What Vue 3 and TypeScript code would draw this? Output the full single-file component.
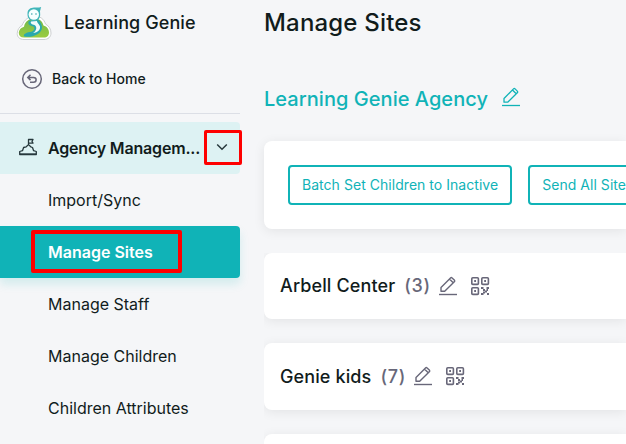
<script setup lang="ts">
interface Site {
  name: string
  count: number | null
}

const menu: string[] = ['Import/Sync', 'Manage Sites', 'Manage Staff', 'Manage Children', 'Children Attributes']
const current = 'Manage Sites'
const actions: string[] = ['Batch Set Children to Inactive', 'Send All Site']
const sites: Site[] = [
  { name: 'Arbell Center', count: 3 },
  { name: 'Genie kids', count: 7 },
  { name: '', count: null },
]
</script>

<template>
  <div class="page">
    <aside class="sidebar">
      <div class="brand">
        <svg class="logo" width="36" height="36" viewBox="0 0 36 36">
          <defs>
            <linearGradient id="hill" x1="0" y1="0" x2="0" y2="1">
              <stop offset="0" stop-color="#72b94d" />
              <stop offset="1" stop-color="#9bcc3f" />
            </linearGradient>
          </defs>
          <path d="M8 34.500C3.500 34.500 1.200 32 1.200 28.500C1.200 25 3.500 21.500 6 20.500C8 15 13 11 18.500 11C24 11 28 14 29.500 19C33 21 35 24 35 28C35 32 32 34.500 28 34.500Z" fill="#fff" stroke="#cdd0d1" stroke-width="1" />
          <path d="M8 32.500C4.500 32.500 2.800 30.500 2.800 28C2.800 25 5 22.500 8 21.700C9 16.500 13 13.500 18 13.500C23 13.500 26.500 16 27.500 20.500C31 21.500 33 24.500 33 27.500C33 30.500 31 32.500 28 32.500Z" fill="url(#hill)" />
          <path d="M13 16C11.500 18.500 12.500 20.500 17.500 21.500C19.500 23.500 18 26.500 14 27C9 27.500 6.500 30.500 8.500 31.500C16 33 26 29 26 22.500C26 19 24 17 22.500 15Z" fill="#2aa9ad" />
          <path d="M15 16.500C14 18.500 16 19.500 18.500 20C21.500 22 20.500 26 17 28C22 27.500 24.500 24.500 24 21.500C23 18.500 21 18 21 16Z" fill="#f0fbfb" />
          <path d="M11.500 8C11.800 4.500 14.500 2.800 18 2.600C21 2.600 23 2.800 25.200 2C24.500 3.500 24.700 4.700 24 6L24.200 10C23.700 14.500 21.200 16 18 16C14.300 16 11.500 13.500 11.500 9.500Z" fill="#40b5b9" />
          <circle cx="17.800" cy="9.500" r="5.200" fill="#f7ffff" />
          <circle cx="15.800" cy="9" r=".75" fill="#249fa5" />
          <circle cx="20" cy="9" r=".75" fill="#249fa5" />
        </svg>
        <span class="brand-name">Learning Genie</span>
      </div>
      <div class="back">
        <svg width="22" height="22" viewBox="0 0 22 22" fill="none" stroke="#686779" stroke-width="1.500">
          <circle cx="11" cy="11" r="9.300" />
          <path d="M9.500 6.700L6.800 9.400L9.500 12.100M7 9.400H12.500C16 9.400 16 14.300 12.500 14.300H9" />
        </svg>
        <span>Back to Home</span>
      </div>
      <nav class="nav">
        <div class="group">
          <svg class="group-icon" width="20" height="20" viewBox="0 0 20 20" fill="none" stroke="#26383c" stroke-width="1.300" stroke-linejoin="round">
            <path d="M10.500 7.500V2.500H15L14 4.500L15 6.200H10.500M1.700 17.500V14.500L4.500 13.700L5.600 10.500L8.200 9.800L10.500 7.600L12.800 9.800L14.500 10.500L15.600 13.700L18.300 14.500V17.500Z" />
            <path d="M2 17.200H18" stroke-width="1.600" />
          </svg>
          <span class="group-name">Agency Managem...</span>
          <span class="toggle">
            <svg width="12" height="12" viewBox="0 0 12 12" fill="none" stroke="#26383c" stroke-width="1.500">
              <path d="M1.200 3.500L6 8.200L10.800 3.500" />
            </svg>
          </span>
        </div>
        <div v-for="item in menu" :key="item" class="item" :class="{ active: item === current }">
          <span class="label">{{ item }}</span>
        </div>
      </nav>
    </aside>

    <main class="content">
      <h1>Manage Sites</h1>
      <div class="agency">
        <h2>Learning Genie Agency</h2>
        <svg width="20" height="20" viewBox="0 0 20 20" fill="none" stroke="currentColor" stroke-width="1.300" stroke-linejoin="round">
          <path d="M1 18.500H19" />
          <path d="M3 15.200V11.500L12.500 1.900Q13.300 1.100 14.100 1.900L16.300 4.100Q17.100 4.900 16.300 5.700L6.700 15.200ZM11.700 3.200L15 6.500" />
        </svg>
      </div>
      <div class="card actions">
        <button v-for="action in actions" :key="action" type="button">{{ action }}</button>
      </div>
      <div class="sites">
        <div v-for="(site, i) in sites" :key="i" class="card site">
          <template v-if="site.count !== null">
            <span class="site-name">{{ site.name }}</span>
            <span class="count">({{ site.count }})</span>
            <svg class="edit" width="20" height="20" viewBox="0 0 20 20" fill="none" stroke="currentColor" stroke-width="1.400" stroke-linejoin="round">
              <path d="M1 18.500H19" />
              <path d="M3 15.200V11.500L12.500 1.900Q13.300 1.100 14.100 1.900L16.300 4.100Q17.100 4.900 16.300 5.700L6.700 15.200ZM11.700 3.200L15 6.500" />
            </svg>
            <svg class="qr" width="20" height="20" viewBox="0 0 20 20" fill="none" stroke="currentColor" stroke-width="1.600">
              <rect x="1.800" y="1.800" width="6.600" height="6.600" rx="1" />
              <rect x="11.800" y="1.800" width="6.600" height="6.600" rx="1" />
              <rect x="1.800" y="11.800" width="6.600" height="6.600" rx="1" />
              <path d="M4.200 5H6M14.200 5H16M4.200 15H6" stroke-width="1.800" />
              <path d="M11 12H13.500M16.500 12H19M13 14H15M15 15.500H17M13 16.500H15M11 18H13.500M17 18H19M16.500 14H18" stroke-width="2" />
            </svg>
          </template>
        </div>
      </div>
    </main>
  </div>
</template>

<style>
body {
  margin: 0;
  overflow: hidden;
  background: #f5f6f8;
}
</style>

<style scoped>
.page {
  display: flex;
  width: 100vw;
  height: 444px;
  overflow: hidden;
  background: #f5f6f8;
  color: #111c1c;
  font-family: Inter, "Liberation Sans", sans-serif;
}
.page * {
  box-sizing: border-box;
}
svg {
  display: block;
  flex: none;
}
.sidebar {
  flex: none;
  width: 240px;
}
.brand {
  display: flex;
  align-items: center;
  gap: 12px;
  height: 46px;
  padding-left: 16px;
}
.brand-name {
  margin-top: -2px;
  font-size: 18px;
  font-weight: 500;
  letter-spacing: 0.08px;
}
.back {
  display: flex;
  align-items: center;
  gap: 9px;
  height: 68px;
  padding: 0 0 2px 21px;
  border-bottom: 1px solid #dcdfe6;
  font-size: 14px;
  font-weight: 500;
  letter-spacing: 0.06px;
}
.nav {
  padding-top: 8px;
}
.group {
  display: flex;
  align-items: center;
  height: 52px;
  padding-left: 18px;
  border-radius: 0 4px 4px 0;
  background: #ddf2f3;
  font-size: 16px;
  font-weight: 600;
}
.group-name {
  flex: none;
  width: 155px;
  margin-left: 10px;
  letter-spacing: -0.18px;
  white-space: nowrap;
}
.group-icon {
  margin-top: -3px;
}
.toggle {
  display: flex;
  flex: none;
  align-items: center;
  justify-content: center;
  width: 38px;
  height: 35px;
  margin: -2px -2px 0 0.5px;
  padding-right: 1px;
  border: 3px solid #fe0000;
  border-radius: 2px;
}
.item {
  display: flex;
  align-items: center;
  height: 52px;
  padding-left: 48px;
  font-size: 16px;
  font-weight: 400;
}
.item.active {
  position: relative;
  padding-left: 31px;
  border-radius: 0 4px 4px 0;
  background: #10b3b7;
  box-shadow: 0 6px 10px rgba(16, 179, 183, 0.15);
  color: #fff;
  font-weight: 600;
}
.active .label {
  display: flex;
  align-items: center;
  width: 151px;
  height: 43px;
  margin-top: -1px;
  padding-left: 13px;
  border: 4px solid #fe0000;
  border-radius: 2px;
}
.content {
  flex: 1;
  min-width: 0;
  padding-left: 24px;
}
h1 {
  height: 46px;
  margin: 0;
  font-size: 24px;
  font-weight: 500;
  line-height: 45px;
  letter-spacing: 0.18px;
}
.agency {
  display: flex;
  align-items: center;
  gap: 13px;
  height: 95px;
  color: #10b3b7;
}
h2 {
  margin: 10px 0 0;
  font-size: 20px;
  font-weight: 500;
  letter-spacing: 0.04px;
}
.agency svg {
  margin-top: 7px;
}
.card {
  border-radius: 8px 0 0 8px;
  background: #fff;
  box-shadow: 0 2px 12px rgba(0, 0, 0, 0.08);
}
.actions {
  display: flex;
  align-items: center;
  gap: 16px;
  height: 88px;
  padding-left: 24px;
}
button {
  flex: none;
  height: 40px;
  padding: 0 12px 1px;
  border: 2px solid #10b3b7;
  border-radius: 4px;
  background: #fff;
  color: #10b3b7;
  font: 400 14px Inter, "Liberation Sans", sans-serif;
  letter-spacing: 0.04px;
}
button:last-child {
  width: 180px;
  text-align: left;
}
.sites {
  display: grid;
  grid-template-rows: 66px 67px 67px;
  gap: 24px;
  margin-top: 24px;
  overflow: hidden;
}
.site {
  display: flex;
  align-items: center;
  padding: 0 0 1px 16px;
  font-size: 18px;
  font-weight: 500;
}
.site-name {
  letter-spacing: 0.12px;
}
.count {
  margin-left: 9px;
  letter-spacing: 0.7px;
  color: #686779;
}
.edit {
  margin-left: 7px;
  color: #686779;
}
.qr {
  margin-left: 12px;
  color: #686779;
}
</style>
